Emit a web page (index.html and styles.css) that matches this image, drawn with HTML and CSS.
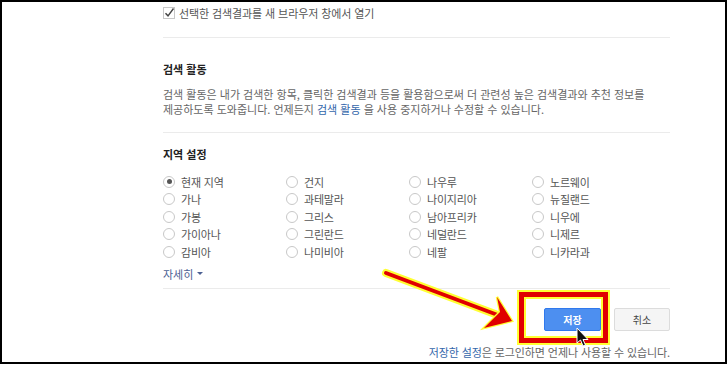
FILE: index.html
```html
<!DOCTYPE html>
<html lang="ko">
<head>
    <meta charset="UTF-8">
    <title>검색 설정</title>
    <link rel="stylesheet" href="styles.css">
</head>
<body>
<div class="frame">
    <div class="settings">
        <div class="check-row">
            <svg class="checkbox" width="12" height="12" viewBox="0 0 12 12">
                <rect x="0.5" y="0.5" width="11" height="11" fill="#fff" stroke="#c8c8c8"/>
                <path d="M2.5 6.2 L5 8.8 L10.5 1.5" fill="none" stroke="#444" stroke-width="1.4"/>
            </svg>
            <span>선택한 검색결과를 새 브라우저 창에서 열기</span>
        </div>
        <div class="divider first"></div>

        <h3 class="section-title">검색 활동</h3>
        <p class="desc">검색 활동은 내가 검색한 항목, 클릭한 검색결과 등을 활용함으로써 더 관련성 높은 검색결과와 추천 정보를 제공하도록 도와줍니다. 언제든지 <a class="link">검색 활동</a> 을 사용 중지하거나 수정할 수 있습니다.</p>
        <div class="divider mid"></div>

        <h3 class="section-title region-title">지역 설정</h3>
        <div class="regions">
            <label class="radio"><span class="dot on"></span>현재 지역</label>
            <label class="radio"><span class="dot"></span>건지</label>
            <label class="radio"><span class="dot"></span>나우루</label>
            <label class="radio"><span class="dot"></span>노르웨이</label>
            <label class="radio"><span class="dot"></span>가나</label>
            <label class="radio"><span class="dot"></span>과테말라</label>
            <label class="radio"><span class="dot"></span>나이지리아</label>
            <label class="radio"><span class="dot"></span>뉴질랜드</label>
            <label class="radio"><span class="dot"></span>가봉</label>
            <label class="radio"><span class="dot"></span>그리스</label>
            <label class="radio"><span class="dot"></span>남아프리카</label>
            <label class="radio"><span class="dot"></span>니우에</label>
            <label class="radio"><span class="dot"></span>가이아나</label>
            <label class="radio"><span class="dot"></span>그린란드</label>
            <label class="radio"><span class="dot"></span>네덜란드</label>
            <label class="radio"><span class="dot"></span>니제르</label>
            <label class="radio"><span class="dot"></span>감비아</label>
            <label class="radio"><span class="dot"></span>나미비아</label>
            <label class="radio"><span class="dot"></span>네팔</label>
            <label class="radio"><span class="dot"></span>니카라과</label>
        </div>
        <div class="more">자세히 <span class="caret"></span></div>
        <div class="divider last"></div>

        <div class="actions">
            <button class="btn save">저장</button>
            <button class="btn cancel">취소</button>
        </div>
        <p class="note"><a class="link">저장한 설정</a>은 로그인하면 언제나 사용할 수 있습니다.</p>
    </div>

    <!-- annotation drawn on top of the screenshot -->
    <div class="highlight"></div>
    <svg class="arrow" width="728" height="365" viewBox="0 0 728 365">
        <line x1="386" y1="273" x2="503" y2="317" stroke="#ffff33" stroke-width="8" stroke-linecap="round"/>
        <line x1="386" y1="273" x2="503" y2="317" stroke="#e00000" stroke-width="4" stroke-linecap="round"/>
        <polygon points="512,321 497,297 500,312 484,328" fill="#e00000" stroke="#ffff33" stroke-width="2.5" stroke-linejoin="miter" paint-order="stroke"/>
        <polygon points="577,328 577,343 580.5,340 583,346 585.5,345 583,339.5 588,339.5" fill="#111" stroke="#fff" stroke-width="1"/>
    </svg>
</div>
</body>
</html>
```

FILE: styles.css
```css
body { margin: 0; background: #fff; font-family: "Noto Sans CJK KR", "Noto Sans", sans-serif; }
.frame { position: relative; width: 723px; height: 360px; border: 2px solid #000; overflow: hidden; background: #fff; }
.settings { width: 507px; margin-left: 161px; font-size: 11px; color: #666; }

.check-row { display: flex; align-items: center; gap: 4px; height: 14px; margin-top: 4px; color: #555; letter-spacing: -0.1px; }
.checkbox { flex: none; }

.divider { border-top: 1px solid #ebebeb; }
.divider.first { margin-top: 17px; }
.divider.mid { margin-top: 15px; }
.divider.last { margin-top: 6px; }

.section-title { margin: 23px 0 0; font-size: 11px; line-height: 16px; font-weight: bold; color: #222; }
.region-title { margin-top: 13px; }

.desc { margin: 10px 0 0; line-height: 15px; word-break: keep-all; }
.link { color: #3366aa; text-decoration: none; }

.regions { display: grid; grid-template-columns: repeat(4, 123px); margin-top: 11px; }
.radio { display: flex; align-items: center; gap: 6px; height: 17.5px; color: #555; letter-spacing: -0.2px; }
.dot { width: 10px; height: 10px; border: 1px solid #c8c8c8; border-radius: 50%; position: relative; flex: none; }
.dot.on::after { content: ""; position: absolute; left: 2.5px; top: 2.5px; width: 5px; height: 5px; border-radius: 50%; background: #555; }

.more { margin-top: 5px; line-height: 16px; color: #4c6193; display: flex; align-items: center; gap: 4px; }
.caret { width: 0; height: 0; border-left: 3px solid transparent; border-right: 3px solid transparent; border-top: 3px solid #4c6193; }

.actions { display: flex; justify-content: flex-end; gap: 13px; margin-top: 19px; }
.btn { height: 23px; border-radius: 2px; font-family: inherit; font-size: 10px; padding: 0; }
.save { width: 57px; background: #4d8ff0; border: 1px solid #3079ed; color: #fff; font-weight: bold; }
.cancel { width: 56px; background: #f5f5f5; border: 1px solid #dcdcdc; color: #444; }

.note { margin: 13px 0 0; text-align: right; line-height: 16px; color: #666; letter-spacing: -0.1px; }

.highlight { position: absolute; left: 517px; top: 290px; width: 79px; height: 41px; border: 5px solid #e00000; box-shadow: 0 0 0 2px #ffff33, inset 0 0 0 2px #ffff33; }
.arrow { position: absolute; left: -2px; top: -2px; }
```
